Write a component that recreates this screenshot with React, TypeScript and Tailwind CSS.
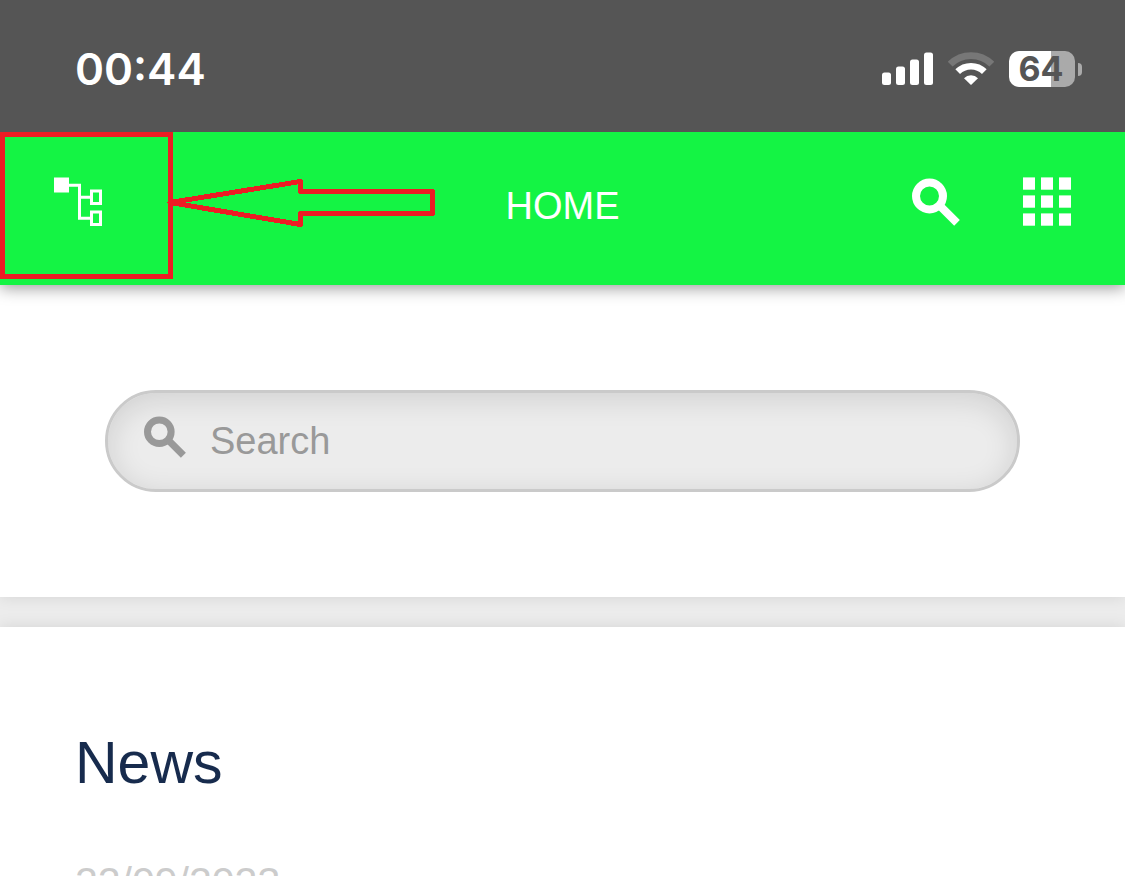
function SignalIcon() {
  return (
    <svg width="51" height="34" viewBox="0 0 51 34" fill="#fff" aria-hidden="true">
      <rect x="0" y="20.5" width="9" height="12.5" rx="2.5" />
      <rect x="14" y="14.5" width="9" height="18.5" rx="2.5" />
      <rect x="28" y="7.5" width="9" height="25.5" rx="2.5" />
      <rect x="42" y="0.5" width="9" height="32.5" rx="2.5" />
    </svg>
  )
}

function WifiIcon() {
  return (
    <svg width="46" height="34" viewBox="0 0 46 34" fill="none" aria-hidden="true">
      <path d="M2.2 12.2A29.5 29.5 0 0 1 43.8 12.2" stroke="#777" strokeWidth="6.8" />
      <path d="M9.7 19.7A18.8 18.8 0 0 1 36.3 19.7" stroke="#fff" strokeWidth="6.6" />
      <path d="M23 33L16 26.2A10 10 0 0 1 30 26.2Z" fill="#fff" />
    </svg>
  )
}

function TreeIcon() {
  return (
    <svg width="48" height="49" viewBox="0 0 48 49" fill="none" aria-hidden="true">
      <rect x="0" y="0.5" width="15" height="15" fill="#fff" />
      <path
        d="M15 8.3H25.5V41.2H36M25.5 20.2H36M37.5 14H46.5V26.5H37.5ZM37.5 35H46.5V47.5H37.5Z"
        stroke="#fff"
        strokeWidth="3"
      />
    </svg>
  )
}

function SearchIcon({ className }: { className?: string }) {
  return (
    <svg className={className} viewBox="0 0 48 48" fill="none" stroke="currentColor" strokeWidth="8" aria-hidden="true">
      <circle cx="17.5" cy="18" r="13.5" />
      <path d="M27 26.8L45 44.8" />
    </svg>
  )
}

function GridIcon() {
  return (
    <svg width="48" height="49" viewBox="0 0 48 49" fill="#fff" aria-hidden="true">
      {[0, 18, 36].map((y) =>
        [0, 18, 36].map((x) => <rect key={`${x}-${y}`} x={x} y={y + 0.4} width="12" height="12.3" />)
      )}
    </svg>
  )
}

function StatusBar() {
  return (
    <div className="relative z-20 flex h-[132px] shrink-0 items-center justify-between bg-[#555] pt-1.5 pr-[43px] pl-[75px] font-['Inter',sans-serif]">
      <span className="text-[44px] leading-none font-semibold text-white">00:44</span>
      <div className="flex items-center gap-[15px]">
        <SignalIcon />
        <WifiIcon />
        <div className="flex items-center gap-[3px]">
          <div className="flex h-9 w-[66px] items-center justify-center rounded-[10px] bg-linear-to-r from-white from-64% to-[#aaa] to-64% pr-0.5 text-[34px] leading-none font-bold text-[#555]">
            64
          </div>
          <div className="h-[13px] w-1 rounded-r-full bg-[#aaa]" />
        </div>
      </div>
    </div>
  )
}

function Header() {
  return (
    <header className="relative z-10 grid h-[153px] shrink-0 grid-cols-[1fr_auto_1fr] items-center bg-[#14f444] pr-[54px] pb-3.5 pl-[54px] shadow-[0_3px_15px_rgba(0,0,0,0.4)]">
      <button type="button" aria-label="Site tree" className="justify-self-start">
        <TreeIcon />
      </button>
      <h1 className="pt-2 text-[38px] leading-none text-white">HOME</h1>
      <div className="flex items-center gap-[63px] justify-self-end">
        <button type="button" aria-label="Search" className="text-white">
          <SearchIcon className="size-12" />
        </button>
        <button type="button" aria-label="Apps">
          <GridIcon />
        </button>
      </div>

      {/* callout around the tree button */}
      <div className="pointer-events-none absolute top-0 left-0 flex items-center">
        <div className="h-[147px] w-[173px] border-5 border-[#ed1c24]" />
        <svg
          className="-ml-1.5 overflow-visible"
          width="268"
          height="48"
          viewBox="0 0 268 48"
          fill="none"
          stroke="#ed1c24"
          strokeWidth="5"
          shapeRendering="crispEdges"
          aria-hidden="true"
        >
          <path d="M3 20.5L133.5 -0.5V9.5H265.5V31.5H133.5V42.5Z" strokeLinejoin="round" />
        </svg>
      </div>
    </header>
  )
}

export default function App() {
  return (
    <div className="flex h-screen flex-col overflow-hidden bg-[#ececec] font-['Liberation_Sans',Arial,sans-serif]">
      <StatusBar />
      <Header />
      <main className="flex flex-col gap-[30px]">
        <section className="bg-white p-[105px] shadow-[0_0_15px_rgba(0,0,0,0.1)]">
          <label className="flex h-[102px] items-center gap-6 rounded-full border-3 border-[#cacaca] bg-[#ececec] pr-9 pl-9 text-[#999] shadow-[inset_0_6px_30px_rgba(0,0,0,0.12)]">
            <SearchIcon className="mb-2 size-[42px] shrink-0" />
            <input
              type="search"
              aria-label="Search"
              placeholder="Search"
              className="min-w-0 flex-1 bg-transparent text-[38px] leading-none outline-none placeholder:text-[#999]"
            />
          </label>
        </section>
        <section className="bg-white px-[75px] pt-[106px] pb-[105px] shadow-[0_0_15px_rgba(0,0,0,0.1)]">
          <h2 className="text-[59px] leading-[60px] text-[#172b4d]">News</h2>
          <p className="mt-[65px] text-[41px] leading-[48px] text-[#ccc]">22/09/2023</p>
        </section>
      </main>
    </div>
  )
}
